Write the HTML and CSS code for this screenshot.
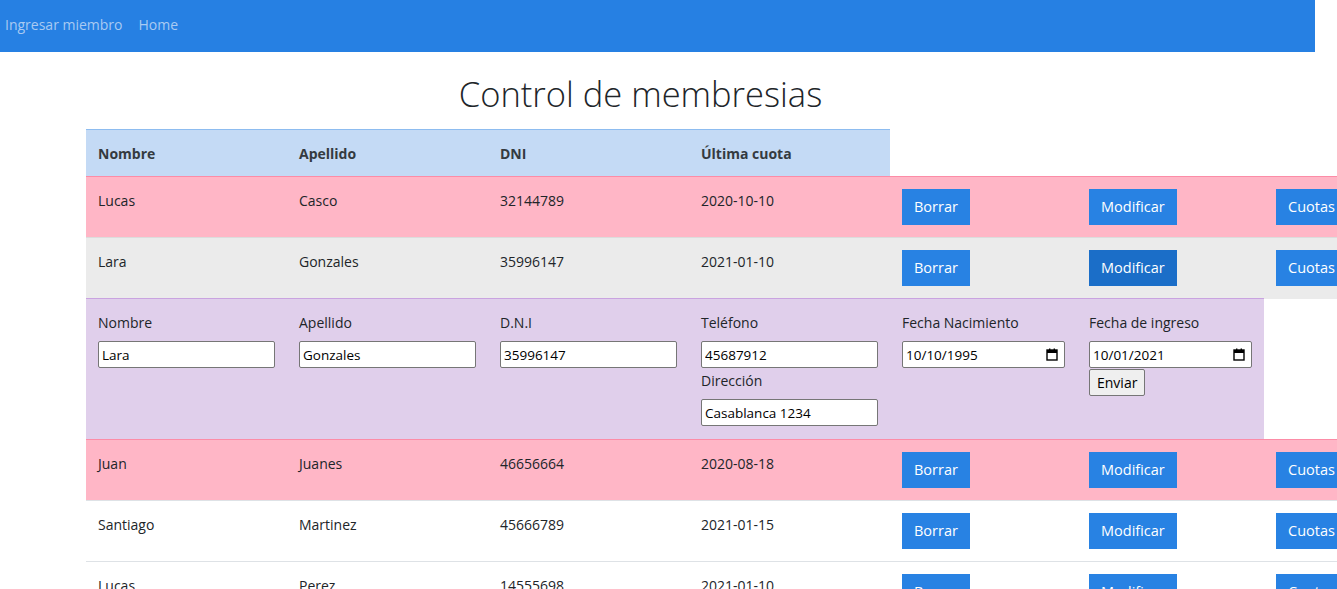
FILE: index.html
```html
<!DOCTYPE html>
<html lang="es">
<head>
<meta charset="utf-8">
<title>Control de membresias</title>
<link rel="stylesheet" href="styles.css">
</head>
<body>
<nav class="navbar">
  <a class="nav-link" href="#">Ingresar miembro</a>
  <a class="nav-link" href="#">Home</a>
</nav>
<h1 class="title">Control de membresias</h1>
<table class="members">
  <colgroup>
    <col class="c-wide"><col class="c-wide"><col class="c-wide"><col class="c-wide">
    <col class="c-btn"><col class="c-btn"><col class="c-last">
  </colgroup>
  <thead>
    <tr class="head-row">
      <th>Nombre</th><th>Apellido</th><th>DNI</th><th>Última cuota</th>
    </tr>
  </thead>
  <tbody>
    <tr class="row-danger">
      <td>Lucas</td><td>Casco</td><td>32144789</td><td>2020-10-10</td>
      <td><button class="btn">Borrar</button></td>
      <td><button class="btn">Modificar</button></td>
      <td><button class="btn">Cuotas</button></td>
    </tr>
    <tr class="row-gray">
      <td>Lara</td><td>Gonzales</td><td>35996147</td><td>2021-01-10</td>
      <td><button class="btn">Borrar</button></td>
      <td><button class="btn btn-active">Modificar</button></td>
      <td><button class="btn">Cuotas</button></td>
    </tr>
    <tr class="row-form">
      <td>
        <label class="f-label">Nombre</label>
        <input class="f-input" type="text" value="Lara">
      </td>
      <td>
        <label class="f-label">Apellido</label>
        <input class="f-input" type="text" value="Gonzales">
      </td>
      <td>
        <label class="f-label">D.N.I</label>
        <input class="f-input" type="text" value="35996147">
      </td>
      <td>
        <label class="f-label">Teléfono</label>
        <input class="f-input" type="text" value="45687912">
        <label class="f-label f-label-sub">Dirección</label>
        <input class="f-input" type="text" value="Casablanca 1234">
      </td>
      <td>
        <label class="f-label">Fecha Nacimiento</label>
        <div class="f-date"><span>10/10/1995</span><svg class="cal" viewBox="0 0 12 13" width="12" height="13"><rect x="1" y="2" width="10" height="10" fill="none" stroke="#000" stroke-width="1.4"/><rect x="1" y="2" width="10" height="3" fill="#000"/><rect x="3" y="0.5" width="1.4" height="2.5" fill="#000"/><rect x="7.6" y="0.5" width="1.4" height="2.5" fill="#000"/></svg></div>
      </td>
      <td>
        <label class="f-label">Fecha de ingreso</label>
        <div class="f-date"><span>10/01/2021</span><svg class="cal" viewBox="0 0 12 13" width="12" height="13"><rect x="1" y="2" width="10" height="10" fill="none" stroke="#000" stroke-width="1.4"/><rect x="1" y="2" width="10" height="3" fill="#000"/><rect x="3" y="0.5" width="1.4" height="2.5" fill="#000"/><rect x="7.6" y="0.5" width="1.4" height="2.5" fill="#000"/></svg></div>
        <button class="send">Enviar</button>
      </td>
    </tr>
    <tr class="row-danger">
      <td>Juan</td><td>Juanes</td><td>46656664</td><td>2020-08-18</td>
      <td><button class="btn">Borrar</button></td>
      <td><button class="btn">Modificar</button></td>
      <td><button class="btn">Cuotas</button></td>
    </tr>
    <tr class="row-plain">
      <td>Santiago</td><td>Martinez</td><td>45666789</td><td>2021-01-15</td>
      <td><button class="btn">Borrar</button></td>
      <td><button class="btn">Modificar</button></td>
      <td><button class="btn">Cuotas</button></td>
    </tr>
    <tr class="row-plain">
      <td>Lucas</td><td>Perez</td><td>14555698</td><td>2021-01-10</td>
      <td><button class="btn">Borrar</button></td>
      <td><button class="btn">Modificar</button></td>
      <td><button class="btn">Cuotas</button></td>
    </tr>
  </tbody>
</table>
</body>
</html>
```

FILE: styles.css
```css
html {
  overflow: hidden;
}
body {
  margin: 0;
  font-family: "Open Sans", "Noto Sans", sans-serif;
  font-size: 14px;
  color: #212529;
  background: #fff;
}
.navbar {
  width: 1315px;
  box-sizing: border-box;
  height: 52px;
  background: #2680e3;
  display: flex;
  align-items: center;
  padding-left: 5px;
  gap: 16px;
}
.nav-link {
  color: #a9caf2;
  text-decoration: none;
  font-size: 14px;
  line-height: 20px;
  margin-top: -2px;
}
.title {
  width: 1315px;
  margin: 20px 0 0 0;
  height: 57px;
  font-size: 34.5px;
  font-weight: 300;
  line-height: 44px;
  text-align: center;
  padding-right: 34px;
  box-sizing: border-box;
  color: #212529;
}
.members {
  margin-left: 86px;
  border-collapse: collapse;
  table-layout: fixed;
  width: 1328px;
}
.c-wide { width: 201px; }
.c-btn { width: 187px; }
.c-last { width: 150px; }
.members th,
.members td {
  padding: 12px;
  text-align: left;
  vertical-align: top;
  line-height: 24px;
  white-space: nowrap;
}
.head-row th {
  background: #c4daf5;
  border-top: 1px solid #8dbcf0;
  font-weight: 700;
  color: #343a40;
  padding-top: 12px;
  padding-bottom: 10px;
}
.row-danger td {
  background: #ffb6c6;
  border-top: 1px solid #fc8ca7;
}
.row-gray td {
  background: #ebebeb;
  border-top: 1px solid #dcdcdc;
}
.row-plain td {
  background: #fff;
  border-top: 1px solid #dee2e6;
}
.row-form td {
  background: #e0cfeb;
  border-top: 1px solid #c9a3e0;
  padding-top: 14px;
  padding-bottom: 13px;
}
.members tbody tr:not(.row-form) td {
  height: 36px;
}
.btn {
  display: inline-block;
  border: 0;
  border-radius: 0;
  background: #2882e3;
  color: #fff;
  font-family: inherit;
  font-size: 14.5px;
  line-height: 24px;
  height: 36px;
  padding: 0 12px;
  margin-top: 0;
  cursor: pointer;
}
.btn-active {
  background: #1b6ec8;
}
.f-label {
  display: block;
  font-size: 14px;
  line-height: 20px;
  color: #212529;
  margin-bottom: 8px;
}
.f-label-sub {
  margin-top: 3px;
  margin-bottom: 8px;
}
.f-input,
.f-date {
  display: flex;
  align-items: center;
  box-sizing: border-box;
  width: 177px;
  height: 27px;
  margin: 0;
  padding: 0 3px;
  border: 1px solid #767676;
  border-radius: 2px;
  background: #fff;
  font-family: inherit;
  font-size: 13.5px;
  color: #000;
}
.f-date {
  width: 163px;
  justify-content: space-between;
  padding-right: 6px;
}
.cal {
  display: block;
}
.send {
  display: block;
  margin-top: 1px;
  height: 27px;
  padding: 0 7px;
  background: #efefef;
  border: 1px solid #767676;
  border-radius: 2px;
  font-family: inherit;
  font-size: 14px;
  color: #000;
}
```
